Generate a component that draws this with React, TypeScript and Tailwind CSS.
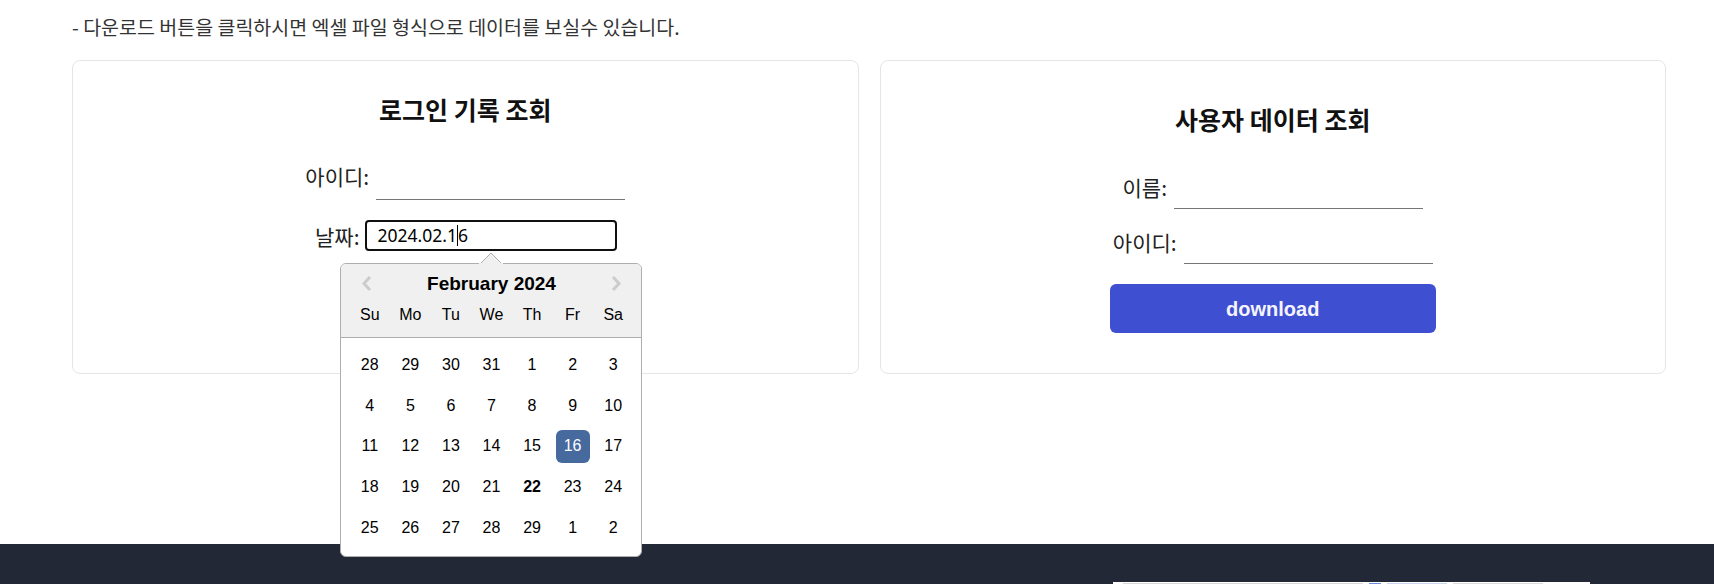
import React from "react";

const KR = { fontFamily: '"Noto Sans CJK KR", "Noto Sans", sans-serif' };
const ARIAL = { fontFamily: '"Liberation Sans", Arial, sans-serif' };

const weeks: number[][] = [
  [28, 29, 30, 31, 1, 2, 3],
  [4, 5, 6, 7, 8, 9, 10],
  [11, 12, 13, 14, 15, 16, 17],
  [18, 19, 20, 21, 22, 23, 24],
  [25, 26, 27, 28, 29, 1, 2],
];
const dayNames = ["Su", "Mo", "Tu", "We", "Th", "Fr", "Sa"];

function Calendar() {
  return (
    <div className="absolute left-[-25px] top-[43px] z-20 w-[302px]" style={ARIAL}>
      <svg className="absolute left-[139px] top-[-11px]" width="24" height="12" viewBox="0 0 24 12">
        <polygon points="1,12 12,1 23,12" fill="#f0f0f0" stroke="#aeaeae" strokeWidth="1" />
        <rect x="0" y="11" width="24" height="2" fill="#f0f0f0" />
      </svg>
      <div className="rounded-[6px] border border-[#aeaeae] bg-white overflow-hidden">
        <div className="relative h-[74px] border-b border-[#aeaeae] bg-[#f0f0f0]">
          <svg className="absolute left-[20px] top-[11px]" width="12" height="17" viewBox="0 0 12 17">
            <polyline points="9,2 3,8.5 9,15" fill="none" stroke="#cccccc" strokeWidth="3" />
          </svg>
          <svg className="absolute right-[19px] top-[11px]" width="12" height="17" viewBox="0 0 12 17">
            <polyline points="3,2 9,8.5 3,15" fill="none" stroke="#cccccc" strokeWidth="3" />
          </svg>
          <div className="pt-[9px] text-center text-[19px] leading-[22px] font-bold text-black">
            February 2024
          </div>
          <div className="mt-[9px] grid grid-cols-7 px-[8px] text-[16px] leading-[22px] text-black">
            {dayNames.map((d) => (
              <div key={d} className="text-center">
                {d}
              </div>
            ))}
          </div>
        </div>
        <div className="px-[8px] pt-[7px] pb-[8px]">
          {weeks.map((w, i) => (
            <div key={i} className="grid grid-cols-7">
              {w.map((d, j) => {
                const sel = i === 2 && j === 5;
                const today = i === 3 && j === 4;
                return (
                  <div key={j} className="flex h-[40.6px] items-center justify-center">
                    <span
                      className={
                        "flex h-[33px] w-[34px] items-center justify-center rounded-[6px] text-[16px] " +
                        (sel ? "bg-[#46699e] text-white" : "text-black") +
                        (today ? " font-bold" : "")
                      }
                    >
                      {d}
                    </span>
                  </div>
                );
              })}
            </div>
          ))}
        </div>
      </div>
    </div>
  );
}

export default function App() {
  return (
    <div className="relative h-[584px] w-full overflow-hidden bg-white" style={KR}>
      <div className="h-[544px] pl-[72px] pr-[48px]">
        <div className="pt-[15px] text-[19.5px] leading-[24px] text-[#333333]">
          - 다운로드 버튼을 클릭하시면 엑셀 파일 형식으로 데이터를 보실수 있습니다.
        </div>
        <div className="mt-[21px] grid grid-cols-2 gap-[21px]">
          {/* Left card */}
          <div className="relative z-10 flex h-[314px] flex-col items-center rounded-[8px] border border-[#e6e6e6] pt-[32px]">
            <div className="text-[25px] leading-[32px] font-bold text-[#111111]">로그인 기록 조회</div>
            <div className="mt-[39px] flex items-start gap-[7px]">
              <div className="text-[21px] leading-[24px] text-[#222222]">아이디:</div>
              <div className="h-[36px] w-[249px] border-b border-[#767676]" />
            </div>
            <div className="mt-[20px] flex items-center gap-[6px] pl-[2px]">
              <div className="text-[21px] leading-[24px] text-[#222222]">날짜:</div>
              <div className="relative">
                <div
                  className="flex h-[31px] w-[252px] items-center rounded-[4px] border-2 border-[#101010] pl-[10px] text-[17.5px] text-black"
                  style={{ fontFamily: '"Noto Sans", sans-serif' }}
                >
                  <span>2024.02.1</span>
                  <span className="inline-block h-[21px] w-px bg-black" />
                  <span>6</span>
                </div>
                <Calendar />
              </div>
            </div>
          </div>
          {/* Right card */}
          <div className="flex h-[314px] flex-col items-center rounded-[8px] border border-[#e6e6e6] pt-[42px]">
            <div className="text-[25px] leading-[32px] font-bold text-[#111111]">사용자 데이터 조회</div>
            <div className="mt-[40px] flex items-start gap-[7px]">
              <div className="text-[21px] leading-[24px] text-[#222222]">이름:</div>
              <div className="h-[34px] w-[249px] border-b border-[#767676]" />
            </div>
            <div className="mt-[21px] flex items-start gap-[7px]">
              <div className="text-[21px] leading-[24px] text-[#222222]">아이디:</div>
              <div className="h-[34px] w-[249px] border-b border-[#767676]" />
            </div>
            <button
              className="mt-[20px] flex h-[49px] w-[326px] items-center justify-center rounded-[6px] bg-[#3f4fd1] text-[20px] font-bold text-[#f4f4ff]"
              style={ARIAL}
            >
              download
            </button>
          </div>
        </div>
      </div>
      <footer className="h-[40px] bg-[#232837]">
        <div className="ml-[1113px] flex h-[40px] w-[477px] translate-y-[38px] items-start gap-[6px] bg-white px-[10px] pt-[1px]">
          <div className="h-[3px] w-[240px] bg-[#d8d8d8]" />
          <div className="h-[3px] w-[12px] bg-[#6d8be0]" />
          <div className="h-[3px] w-[60px] bg-[#c9d4f0]" />
          <div className="h-[3px] w-[90px] bg-[#dcdcdc]" />
        </div>
      </footer>
    </div>
  );
}
